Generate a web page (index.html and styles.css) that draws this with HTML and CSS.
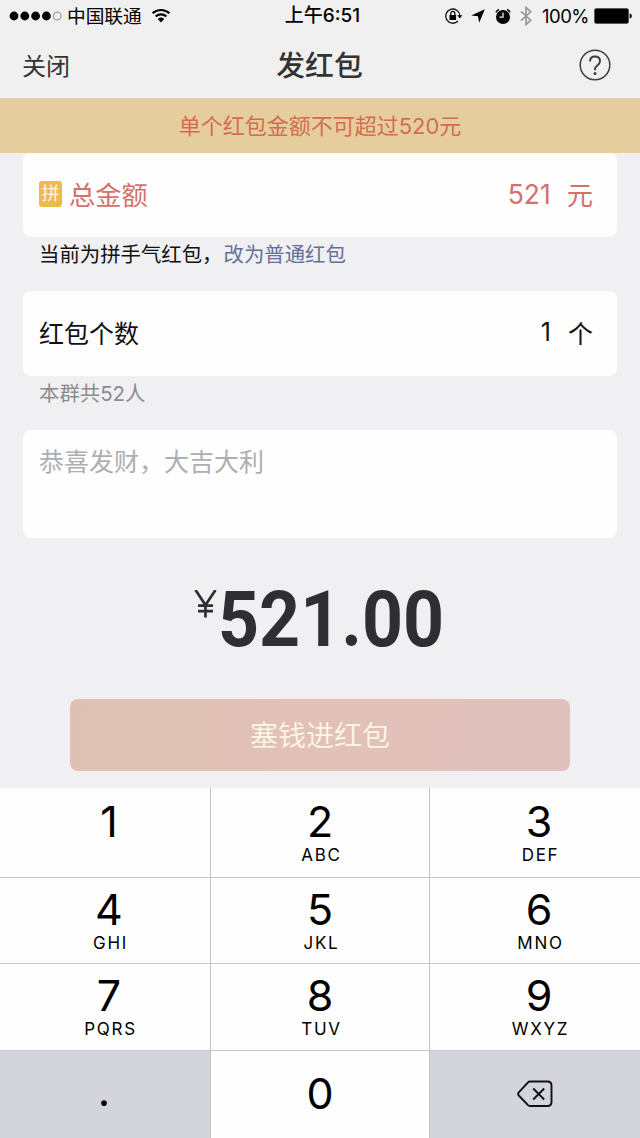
FILE: index.html
```html
<!DOCTYPE html>
<html lang="zh-CN">
<head>
<meta charset="utf-8">
<title>发红包</title>
<link rel="stylesheet" href="styles.css">
</head>
<body>
<div class="screen">
  <header class="status">
    <div class="status-left">
      <svg class="signal" width="54" height="12" viewBox="0 0 54 12"><circle cx="5" cy="6" r="4.4"/><circle cx="15.8" cy="6" r="4.4"/><circle cx="26.6" cy="6" r="4.4"/><circle cx="37.4" cy="6" r="4.4"/><circle cx="48.2" cy="6" r="4" fill="none" stroke="#777" stroke-width=".8"/></svg>
      <span class="carrier">中国联通</span>
      <svg class="wifi" width="20" height="16" viewBox="0 0 20 16"><path d="M1.6 5.3a12.3 12.3 0 0 1 16.8 0M4.6 8.5a8 8 0 0 1 10.8 0" fill="none" stroke="#000" stroke-width="2.2"/><path d="M6.8 11a4.8 4.8 0 0 1 6.4 0L10 14.4z"/></svg>
    </div>
    <div class="clock">上午6:51</div>
    <div class="status-right">
      <svg width="19" height="18" viewBox="0 0 19 18"><path d="M14 14a7.100 7.100 0 1 1 1.900-5.300" fill="none" stroke="#111" stroke-width="1.300"/><path d="M13.200 8.300h5.200l-2.600 3.200z"/><rect x="5.500" y="8" width="6.600" height="5" rx=".5"/><path d="M6.800 8V6.400a2 2 0 0 1 4 0V8" fill="none" stroke="#000" stroke-width="1.200"/></svg>
      <svg class="arrow" width="14" height="14" viewBox="0 0 14 14"><path d="M13.800.2 8.200 13.700 7 7.200.2 6.500z"/></svg>
      <svg class="alarm" width="16" height="17" viewBox="0 0 16 17"><circle cx="8" cy="9" r="7"/><path d="M.9 4.400a8 8 0 0 1 3-3M12.100 1.400a8 8 0 0 1 3 3" fill="none" stroke="#000" stroke-width="1.500"/><path d="M8 4.600v4.600H4.400" fill="none" stroke="#f0f0f0" stroke-width="1.300"/></svg>
      <svg class="bluetooth" width="12" height="20" viewBox="0 0 12 20"><path d="m1 5.400 9.800 8.800L6 18.600V1.400l4.800 4.400L1 14.600" fill="none" stroke="#999" stroke-width="1.700"/></svg>
      <span class="percent">100%</span>
      <svg class="battery" width="38" height="16" viewBox="0 0 38 16"><rect x=".5" y=".5" width="34" height="15" rx="1.800" fill="#000" stroke="#555" stroke-width=".8"/><path d="M35.600 5.300q2.200.6 2.200 2.700t-2.200 2.700z"/></svg>
    </div>
  </header>
  <nav class="nav">
    <span class="close">关闭</span>
    <h1 class="title">发红包</h1>
    <svg class="help" width="32" height="32" viewBox="0 0 32 32" fill="none" stroke="#3c3c3c"><circle cx="16" cy="16" r="14.800" stroke-width="1.500"/><path d="M11 12.500q0-5 5-5t5 4.600q0 2.300-2.400 4.100T16 20v1.300" stroke-width="1.900"/><circle cx="16" cy="24.500" r="1.500" fill="#3c3c3c" stroke="none"/></svg>
  </nav>
  <div class="notice">单个红包金额不可超过520元</div>
  <main class="form">
    <section class="card total">
      <span class="badge">拼</span><span class="total-label">总金额</span>
      <span class="value">521</span><span class="unit">元</span>
    </section>
    <p class="hint mode">当前为拼手气红包，<span class="link">改为普通红包</span></p>
    <section class="card count">
      <span>红包个数</span><span class="value">1</span><span class="unit">个</span>
    </section>
    <p class="hint members">本群共52人</p>
    <section class="card message">恭喜发财，大吉大利</section>
    <div class="amount">
      <svg class="yen" width="23" height="28" viewBox="0 0 23 28" fill="none" stroke="#302e32" stroke-width="2.700"><path d="M1.500 0 11.500 15 21.500 0M11.500 14v13.500M4 15.700h15M4 21.200h15"/></svg>
      <span class="digits">521.00</span>
    </div>
    <div class="submit">塞钱进红包</div>
  </main>
  <div class="keypad">
    <div class="key"><b>1</b></div>
    <div class="key"><b>2</b><i>ABC</i></div>
    <div class="key"><b>3</b><i>DEF</i></div>
    <div class="key"><b>4</b><i>GHI</i></div>
    <div class="key"><b>5</b><i>JKL</i></div>
    <div class="key"><b>6</b><i>MNO</i></div>
    <div class="key"><b>7</b><i>PQRS</i></div>
    <div class="key"><b>8</b><i>TUV</i></div>
    <div class="key"><b>9</b><i>WXYZ</i></div>
    <div class="key gray dot"><b>.</b></div>
    <div class="key zero"><b>0</b></div>
    <div class="key gray delete"><svg width="36" height="28" viewBox="0 0 36 28" fill="none" stroke="#111" stroke-linejoin="round"><path d="M13 1.500h17.500q4 0 4 4v16.500q0 4-4 4H13q-1.200 0-2-.8L1.800 15.500q-1.400-1.600 0-3.200L11 2.300q.8-.8 2-.8z" stroke-width="1.900"/><path d="m16.200 8.500 11 11m0-11-11 11" stroke-width="1.900"/></svg></div>
  </div>
</div>
</body>
</html>
```

FILE: styles.css
```css
* { box-sizing: border-box; }
body { margin: 0; background: #f0eff2; font-family: Inter, "Noto Sans CJK SC", sans-serif; color: #111; }
svg { display: block; flex: none; }
.screen { width: 640px; height: 1138px; display: flex; flex-direction: column; overflow: hidden; white-space: nowrap; }

.status { height: 32px; background: #f0f0f0; display: grid; grid-template: 32px / 1fr auto 1fr; align-items: center; padding: 0 8px 0 9px; color: #000; }
.status-left, .status-right { display: flex; align-items: center; }
.status-right { justify-content: flex-end; }
.carrier { font-size: 18.7px; line-height: 30px; margin-left: 4px; padding-top: 2px; }
.wifi { margin-left: 9px; }
.clock { font-size: 19px; font-weight: 500; line-height: 32px; margin-left: 4px; }
.arrow { margin-left: 8px; }
.alarm { margin-left: 10px; }
.bluetooth { margin-left: 9px; }
.percent { font-size: 18.5px; margin-left: 10px; letter-spacing: -.5px; }
.battery { margin-left: 5px; }

.nav { height: 66px; background: #f0f0f0; display: grid; grid-template: 66px / 1fr auto 1fr; align-items: center; padding: 0 29px 0 22px; color: #333; }
.close { font-size: 24px; line-height: 62px; padding-top: 4px; }
.title { margin: 0 -1px 0 5px; font-size: 28.8px; font-weight: 500; line-height: 64px; padding-top: 1px; }
.help { justify-self: end; }

.notice { height: 55px; border-top: 1px solid #dfd3b4; background: #e5cd9e; color: #d46d50; font-size: 22px; line-height: 55px; text-align: center; }

.form { height: 635px; padding: 0 23px; display: flex; flex-direction: column; }
.card { background: #fefefe; border-radius: 8px; display: flex; align-items: center; padding: 0 24px 3px 16px; font-size: 25px; }
.value { margin-left: auto; }
.total { height: 84px; color: #d5706a; font-size: 26.3px; }
.total .value { font-size: 26.5px; }
.total .unit { margin-left: 16px; }
.badge { width: 23px; height: 26px; border-radius: 3px; background: #edbb4a; color: #fff9e5; font-size: 18px; line-height: 26px; text-align: center; margin-right: 7px; }
.hint { margin: 0; padding-left: 16px; font-size: 20.4px; line-height: 36px; }
.mode { height: 54px; }
.link { color: #65709a; margin-left: 1px; }
.count { height: 85px; }
.count .unit { margin-left: 17px; }
.members { height: 54px; color: #8c8b8e; }
.message { height: 108px; align-items: flex-start; color: #aeadb0; line-height: 64px; }
.amount { height: 161px; display: flex; align-items: flex-start; padding: 52px 0 0 171px; color: #302e32; }
.digits { font-family: Roboto, sans-serif; font-size: 78.5px; font-weight: 700; line-height: 58px; width: 226px; transform: scaleX(.912); transform-origin: 0 50%; margin-left: 1px; }
.submit { height: 72px; margin: 0 47px; border-radius: 8px; background: linear-gradient(100deg, #dfc1b3, #e2c1b9 55%, #e0c0bd); color: #fff7e8; font-size: 28px; font-weight: 350; line-height: 75px; text-align: center; }

.keypad { height: 350px; display: grid; grid-template-columns: 211px 219px 210px; grid-template-rows: 90px 86px 87px 87px; }
.key { background: #fefefe; border-right: 1px solid #c2c0c4; border-bottom: 1px solid #c8c6ca; display: flex; flex-direction: column; align-items: center; padding-top: 8px; color: #000; }
.key:nth-child(3n) { border-right: 0; padding-left: 8px; }
.key b { font-size: 43px; font-weight: 400; line-height: 50px; }
.key i { font-size: 17px; font-style: normal; letter-spacing: 1.7px; line-height: 18px; margin: 0 -3px 0 0; }
.key:nth-child(3n+1) { padding-left: 8px; }
.key:nth-child(n+4) { padding-top: 6px; }
.key:nth-child(n+10) { border-bottom: 0; }
.key.zero { padding-top: 17px; }
.key.gray { background: #d3d4dc; }
.key.dot { padding: 14px 2px 0 0; }
.key.delete { padding: 29px 0 0; }
```
